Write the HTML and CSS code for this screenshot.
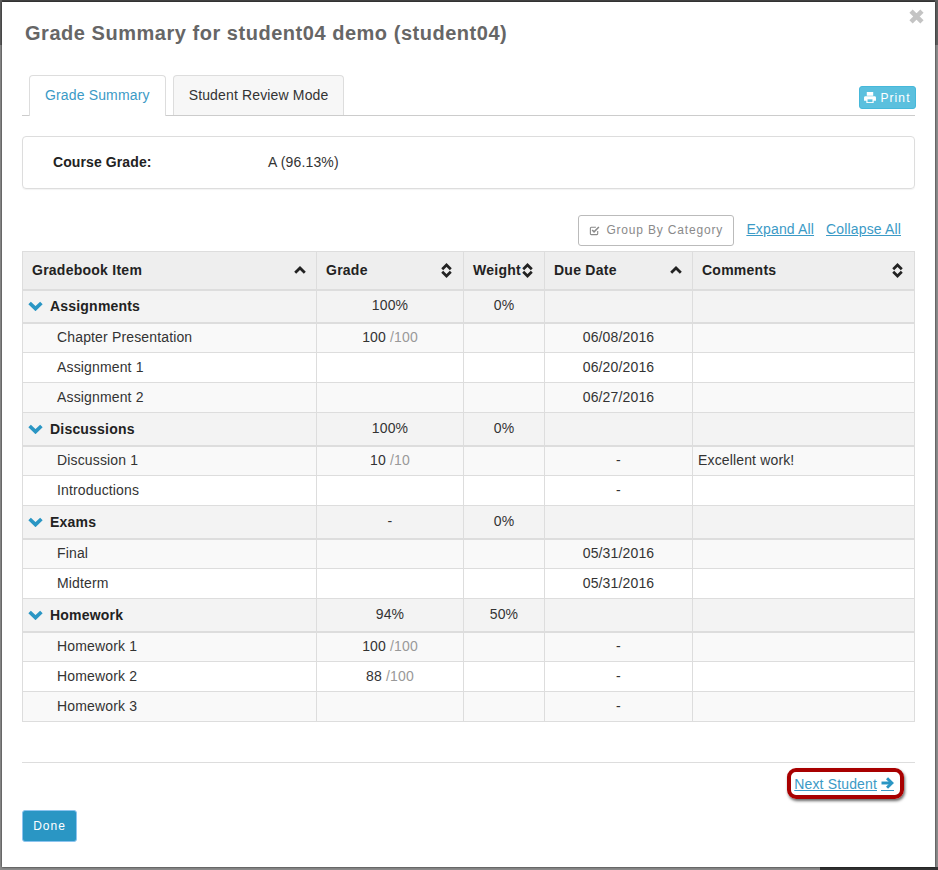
FILE: index.html
```html
<!DOCTYPE html>
<html lang="en">
<head>
<meta charset="utf-8">
<title>Grade Summary</title>
<link rel="stylesheet" href="styles.css">
</head>
<body>
<svg class="defs" width="0" height="0" aria-hidden="true">
  <defs>
    <symbol id="sort" viewBox="0 0 10 14"><path d="M1 5.800 5 1.800l4 4" fill="none" stroke="currentColor" stroke-width="2.500"/><path d="M1 8.200 5 12.200l4-4" fill="none" stroke="currentColor" stroke-width="2.500"/></symbol>
    <symbol id="up" viewBox="0 0 12 8"><path d="M1.200 6.800 6 2l4.800 4.800" fill="none" stroke="currentColor" stroke-width="2.800"/></symbol>
    <symbol id="down" viewBox="0 0 14 9"><path d="M1.500 1.700 7 7l5.500-5.300" fill="none" stroke="currentColor" stroke-width="3.400"/></symbol>
  </defs>
</svg>
<main class="modal">
  <header class="modal-head">
    <h1>Grade Summary for student04 demo (student04)</h1>
    <svg class="close" viewBox="0 0 14 14" aria-label="Close"><path d="M2.500 2.500l9 9M11.500 2.500l-9 9" stroke="#c4c4c4" stroke-width="3.800" fill="none"/></svg>
  </header>
  <nav class="tabs">
    <a class="tab active">Grade Summary</a>
    <a class="tab">Student Review Mode</a>
    <button class="print"><svg viewBox="0 0 13 12" class="print-ico"><path fill="#fff" d="M3 0h7v4H3zM1.500 4.500h10A1.500 1.500 0 0 1 13 6v3.500h-2.500V12h-8V9.500H0V6a1.500 1.500 0 0 1 1.500-1.500z"/><path fill="#5bc0de" d="M3.800 8h5.400v3H3.800z"/></svg>Print</button>
  </nav>
  <section class="course">
    <strong class="course-label">Course Grade:</strong>
    <span>A (96.13%)</span>
  </section>
  <div class="tools">
    <button class="group-btn"><svg viewBox="0 0 12 12" class="check"><path d="M9.500 6.500v3a1 1 0 0 1-1 1h-6a1 1 0 0 1-1-1v-6a1 1 0 0 1 1-1h5" fill="none" stroke="#8a8a8a" stroke-width="1.200"/><path d="M3.500 5.500 5.500 7.500 10.800 2.200" fill="none" stroke="#8a8a8a" stroke-width="1.700"/></svg>Group By Category</button>
    <a class="link">Expand All</a>
    <a class="link">Collapse All</a>
  </div>
  <table class="grades">
    <colgroup><col class="c1"><col class="c2"><col class="c3"><col class="c4"><col class="c5"></colgroup>
    <thead>
      <tr>
        <th><div class="th"><span>Gradebook Item</span><svg class="i-up"><use href="#up"/></svg></div></th>
        <th><div class="th"><span>Grade</span><svg class="i-sort"><use href="#sort"/></svg></div></th>
        <th><div class="th"><span>Weight</span><svg class="i-sort"><use href="#sort"/></svg></div></th>
        <th><div class="th"><span>Due Date</span><svg class="i-up"><use href="#up"/></svg></div></th>
        <th><div class="th"><span>Comments</span><svg class="i-sort"><use href="#sort"/></svg></div></th>
      </tr>
    </thead>
    <tbody>
      <tr class="group"><td><svg class="i-down"><use href="#down"/></svg>Assignments</td><td>100%</td><td>0%</td><td></td><td></td></tr>
      <tr class="odd"><td>Chapter Presentation</td><td>100 <span class="max">/100</span></td><td></td><td>06/08/2016</td><td></td></tr>
      <tr><td>Assignment 1</td><td></td><td></td><td>06/20/2016</td><td></td></tr>
      <tr class="odd"><td>Assignment 2</td><td></td><td></td><td>06/27/2016</td><td></td></tr>
      <tr class="group"><td><svg class="i-down"><use href="#down"/></svg>Discussions</td><td>100%</td><td>0%</td><td></td><td></td></tr>
      <tr class="odd"><td>Discussion 1</td><td>10 <span class="max">/10</span></td><td></td><td>-</td><td>Excellent work!</td></tr>
      <tr><td>Introductions</td><td></td><td></td><td>-</td><td></td></tr>
      <tr class="group"><td><svg class="i-down"><use href="#down"/></svg>Exams</td><td>-</td><td>0%</td><td></td><td></td></tr>
      <tr class="odd"><td>Final</td><td></td><td></td><td>05/31/2016</td><td></td></tr>
      <tr><td>Midterm</td><td></td><td></td><td>05/31/2016</td><td></td></tr>
      <tr class="group"><td><svg class="i-down"><use href="#down"/></svg>Homework</td><td>94%</td><td>50%</td><td></td><td></td></tr>
      <tr class="odd"><td>Homework 1</td><td>100 <span class="max">/100</span></td><td></td><td>-</td><td></td></tr>
      <tr><td>Homework 2</td><td>88 <span class="max">/100</span></td><td></td><td>-</td><td></td></tr>
      <tr class="odd"><td>Homework 3</td><td></td><td></td><td>-</td><td></td></tr>
    </tbody>
  </table>
  <div class="pager">
    <a class="next"><span class="next-text">Next Student</span> <span class="arrow-wrap"><svg viewBox="0 0 14 13" class="arrow"><path d="M.5 6.500h10" fill="none" stroke="#2a96c4" stroke-width="3.200"/><path d="M6.500 1.400 11.800 6.500 6.500 11.600" fill="none" stroke="#2a96c4" stroke-width="3.200"/></svg></span></a>
  </div>
  <button class="done">Done</button>
</main>
</body>
</html>
```
FILE: styles.css
```css
* { box-sizing: border-box; }
html, body { height: 100%; }
body {
  margin: 0;
  overflow: hidden;
  background:
    linear-gradient(#333, #333) right bottom / 118px 3px no-repeat,
    linear-gradient(#5f5f5f 0 45px, #8c8c8c 45px);
  font-family: "Liberation Sans", Arial, sans-serif;
  font-size: 14px;
  letter-spacing: .15px;
  color: #333;
}
.defs { position: absolute; }
.modal {
  width: 933px;
  height: 865px;
  margin: 2px 0 0 2px;
  padding: 0 20px;
  background: #fff;
  box-shadow: 0 0 2px rgba(0,0,0,.8), 0 -2px 0 #444;
}
.modal-head {
  display: flex;
  justify-content: space-between;
  height: 73px;
  margin-left: 3px;
}
.modal-head h1 {
  margin: 19px 0 0;
  font-size: 20px;
  line-height: 24px;
  font-weight: 700;
  letter-spacing: .53px;
  color: #666;
}
.close { width: 17px; height: 17px; margin: 6px -10px 0 0; }
.tabs {
  display: flex;
  align-items: flex-end;
  height: 41px;
  padding-left: 7px;
  gap: 7px;
  border-bottom: 1px solid #ccc;
}
.tab {
  height: 41px;
  padding: 0 15px;
  line-height: 39px;
  border: 1px solid #ddd;
  border-bottom: 0;
  border-radius: 4px 4px 0 0;
  background: #f7f7f7;
  color: #333;
  margin-bottom: -1px;
}
.tab + .tab { height: 40px; margin-bottom: 0; }
.tab.active { background: #fff; color: #3b9ac6; }
.print {
  margin: 0 -1px 6px auto;
  width: 57px;
  height: 23px;
  padding: 0;
  display: flex;
  align-items: center;
  justify-content: center;
  gap: 4px;
  border: 1px solid #46b8da;
  border-radius: 3px;
  background: #5bc0de;
  color: #fff;
  font: 12px "Liberation Sans", Arial, sans-serif;
  letter-spacing: 1.1px;
}
.print-ico { width: 12px; height: 11px; }
.course {
  display: flex;
  align-items: center;
  height: 53px;
  margin-top: 20px;
  padding: 0 0 2px 30px;
  border: 1px solid #ddd;
  border-radius: 4px;
  box-shadow: 0 1px 1px rgba(0,0,0,.05);
}
.course-label { width: 215px; letter-spacing: .1px; color: #222; }
.tools {
  display: flex;
  align-items: center;
  height: 31px;
  margin-top: 26px;
  padding-right: 14px;
  justify-content: flex-end;
  gap: 12px;
}
.group-btn {
  display: flex;
  align-items: center;
  gap: 6px;
  width: 156px;
  height: 31px;
  padding: 0 0 1px 10px;
  border: 1px solid #bbb;
  border-radius: 3px;
  background: #fff;
  color: #8a8a8a;
  font: 12px "Liberation Sans", Arial, sans-serif;
  letter-spacing: .83px;
}
.check { width: 11px; height: 11px; }
.link { color: #3b9ac6; text-decoration: underline; padding-bottom: 3px; }
.grades {
  width: 892px;
  margin-top: 5px;
  border-collapse: collapse;
  table-layout: fixed;
}
.c1 { width: 294px; }
.c2 { width: 147px; }
.c3 { width: 81px; }
.c4 { width: 148px; }
.c5 { width: 222px; }
.grades th, .grades td { border: 1px solid #ddd; padding: 0 9px; }
.grades th {
  height: 38px;
  padding-right: 10px;
  background: #eee;
  border-bottom-width: 2px;
  text-align: left;
}
.th {
  display: flex;
  align-items: center;
  justify-content: space-between;
  color: #222;
  letter-spacing: .25px;
}
.i-up { width: 12px; height: 8px; }
.i-sort { width: 11px; height: 15px; margin-right: 1px; }
.grades td { height: 30px; padding-bottom: 2px; color: #333; }
.grades td:first-child { padding-left: 34px; }
.grades td:nth-child(2), .grades td:nth-child(3), .grades td:nth-child(4) { text-align: center; }
.grades td:last-child { padding-left: 5px; }
.grades tr.odd td { background: #f9f9f9; }
.grades tr.group td { height: 33px; background: #f3f3f3; border-bottom-width: 2px; }
.grades tr.group td:first-child { padding-left: 5px; padding-bottom: 0; font-weight: 700; letter-spacing: .2px; color: #222; }
.i-down { width: 15px; height: 10px; margin-right: 7px; color: #2a96c4; }
.max { color: #999; }
.pager {
  display: flex;
  justify-content: flex-end;
  height: 45px;
  margin-top: 40px;
  padding: 5px 11px 0 0;
  border-top: 1px solid #ddd;
}
.next {
  display: flex;
  align-items: center;
  height: 31px;
  padding: 0 6px 0 3px;
  border: 4px solid #a80000;
  border-radius: 9px;
  box-shadow: 1px 2px 3px rgba(0,0,0,.6);
  color: #3b9ac6;
}
.next-text { text-decoration: underline; }
.arrow-wrap {
  display: flex;
  margin-left: 4px;
  padding-bottom: 1px;
  border-bottom: 1px solid #3b9ac6;
}
.arrow { width: 13px; height: 12px; }
.done {
  display: block;
  width: 55px;
  height: 32px;
  margin-top: 3px;
  padding: 0;
  border: 1px solid #8cc4ef;
  border-radius: 3px;
  background: #2a96c4;
  color: #fff;
  font: 12px "Liberation Sans", Arial, sans-serif;
  letter-spacing: 1px;
}
```
